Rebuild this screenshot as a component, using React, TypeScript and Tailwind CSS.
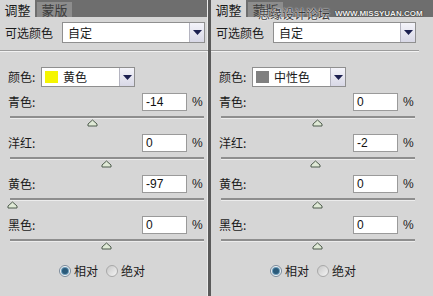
import React from "react";

const cjk = "font-['Noto_Sans_CJK_SC','Noto_Sans',sans-serif]";

function Arrow() {
  return (
    <div className="flex w-[15px] shrink-0 items-center justify-center border-l border-[#b4b4c0] bg-gradient-to-b from-[#f4f4fa] to-[#d8d8e6]">
      <svg width="9" height="5" viewBox="0 0 9 5">
        <path d="M0 0 H9 L4.5 5 Z" fill="#1c2050" />
      </svg>
    </div>
  );
}

function Thumb({ x }: { x: number }) {
  return (
    <svg
      width="11"
      height="8"
      viewBox="0 0 11 8"
      className="absolute top-[1px]"
      style={{ left: x - 5.5 }}
    >
      <path d="M1 7 L1 5 L5.5 1 L10 5 L10 7 Z" fill="#dfe9d6" stroke="#4d5b4c" strokeWidth="1" />
    </svg>
  );
}

function SliderRow({ label, value }: { label: string; value: number }) {
  // track spans x 10..202, 0 sits at 106
  const x = 96 + value * 0.96;
  return (
    <div className="flex flex-col pb-[9px]">
      <div className="flex h-[18px] items-center">
        <span className={`ml-[8px] text-[12px] text-[#1a1a1a] ${cjk}`}>{label}:</span>
        <div className="ml-auto flex h-[18px] w-[45px] items-center border border-[#9a9a9a] bg-white pl-[3px] font-['Liberation_Sans',sans-serif] text-[12px] text-[#111]">
          {value}
        </div>
        <span className="ml-[5px] mr-[6px] w-[10px] font-['Liberation_Sans',sans-serif] text-[12px] text-[#222]">%</span>
      </div>
      <div className="ml-[10px] mr-[4px] mt-[5px] h-[2px] bg-[#8e8e8e] shadow-[0_1px_0_#ececec]" />
      <div className="relative ml-[10px] h-[7px]">
        <Thumb x={x} />
      </div>
    </div>
  );
}

function Radio({ on, label }: { on: boolean; label: string }) {
  return (
    <div className="flex items-center gap-[3px]">
      {on ? (
        <div className="flex h-[12px] w-[12px] items-center justify-center rounded-full border border-[#7a8a9a] bg-[#f2f4f6]">
          <div className="h-[6px] w-[6px] rounded-full bg-[#2a5a7a] shadow-[0_0_0_1px_#6a9ab8]" />
        </div>
      ) : (
        <div className="h-[12px] w-[12px] rounded-full border border-[#a8a8a8] bg-gradient-to-br from-[#c8c8c8] to-[#f4f4f4]" />
      )}
      <span className={`text-[12px] text-[#1a1a1a] ${cjk}`}>{label}</span>
    </div>
  );
}

function Panel({
  swatch,
  colorName,
  values,
  watermark,
  className,
}: {
  swatch: string;
  colorName: string;
  values: number[];
  watermark?: boolean;
  className: string;
}) {
  const labels = ["青色", "洋红", "黄色", "黑色"];
  return (
    <div className={`flex flex-col bg-[#d6d6d6] ${className}`}>
      {/* tab strip */}
      <div className="relative flex h-[17px] items-end gap-[2px] bg-[#6e6e6e]">
        <div className={`flex h-[17px] w-[35px] items-center justify-center bg-[#d6d6d6] pt-[1px] text-[13px] leading-[15px] text-[#1a1a1a] ${cjk}`}>
          调整
        </div>
        <div className={`flex h-[15px] w-[35px] items-center justify-center bg-[#8d8d8d] text-[13px] leading-[15px] text-[#3c3c3c] ${cjk}`}>
          蒙版
        </div>
        {watermark && (
          <div className="absolute left-[47px] top-[7px] flex items-center gap-[5px] whitespace-nowrap">
            <span className={`text-[12px] leading-[14px] text-[#3a3a3a] [text-shadow:0_0_2px_#fff,0_0_1px_#fff] ${cjk}`}>
              思缘设计论坛
            </span>
            <span className="font-['Liberation_Sans',sans-serif] text-[8px] font-bold leading-[10px] text-[#f0f0f0] [text-shadow:0_0_1px_#222,0_0_1px_#222]">
              WWW.MISSYUAN.COM
            </span>
          </div>
        )}
      </div>

      {/* preset */}
      <div className="mt-[5px] flex h-[21px] items-center">
        <span className={`ml-[5px] w-[57px] text-[12px] text-[#1a1a1a] ${cjk}`}>可选颜色</span>
        <div className="flex h-[21px] w-[143px] border border-[#8f8f8f] bg-white">
          <span className={`flex-1 pl-[5px] text-[12px] leading-[19px] text-[#1a1a1a] ${cjk}`}>自定</span>
          <Arrow />
        </div>
      </div>

      <div className="mt-[7px] h-[1px] w-[208px] bg-[#9c9c9c] shadow-[0_1px_0_#f2f2f2]" />

      {/* colour */}
      <div className="mt-[16px] flex h-[20px] items-center">
        <span className={`ml-[8px] w-[33px] text-[12px] text-[#1a1a1a] ${cjk}`}>颜色:</span>
        <div className="flex h-[20px] w-[94px] border border-[#8f8f8f] bg-white">
          <div className="flex flex-1 items-center pl-[3px]">
            <div className={`h-[12px] w-[13px] ${swatch}`} />
            <span className={`ml-[5px] text-[12px] text-[#1a1a1a] ${cjk}`}>{colorName}</span>
          </div>
          <Arrow />
        </div>
      </div>

      <div className="mt-[6px] flex w-[208px] flex-col">
        {values.map((v, i) => (
          <SliderRow key={labels[i]} label={labels[i]} value={v} />
        ))}
      </div>

      <div className="mt-[5px] flex w-[208px] items-center gap-[8px] pl-[59px]">
        <Radio on label="相对" />
        <Radio on={false} label="绝对" />
      </div>
    </div>
  );
}

export default function App() {
  return (
    <div className="flex h-[296px] w-[433px] overflow-hidden bg-[#d6d6d6]">
      <Panel
        className="w-[208px] shrink-0 border-r border-[#ececec]"
        swatch="bg-[#f5f500]"
        colorName="黄色"
        values={[-14, 0, -97, 0]}
      />
      <div className="w-[3px] shrink-0 bg-[#5a5a5a]" />
      <Panel
        className="flex-1"
        swatch="bg-[#808080]"
        colorName="中性色"
        values={[0, -2, 0, 0]}
        watermark
      />
    </div>
  );
}
